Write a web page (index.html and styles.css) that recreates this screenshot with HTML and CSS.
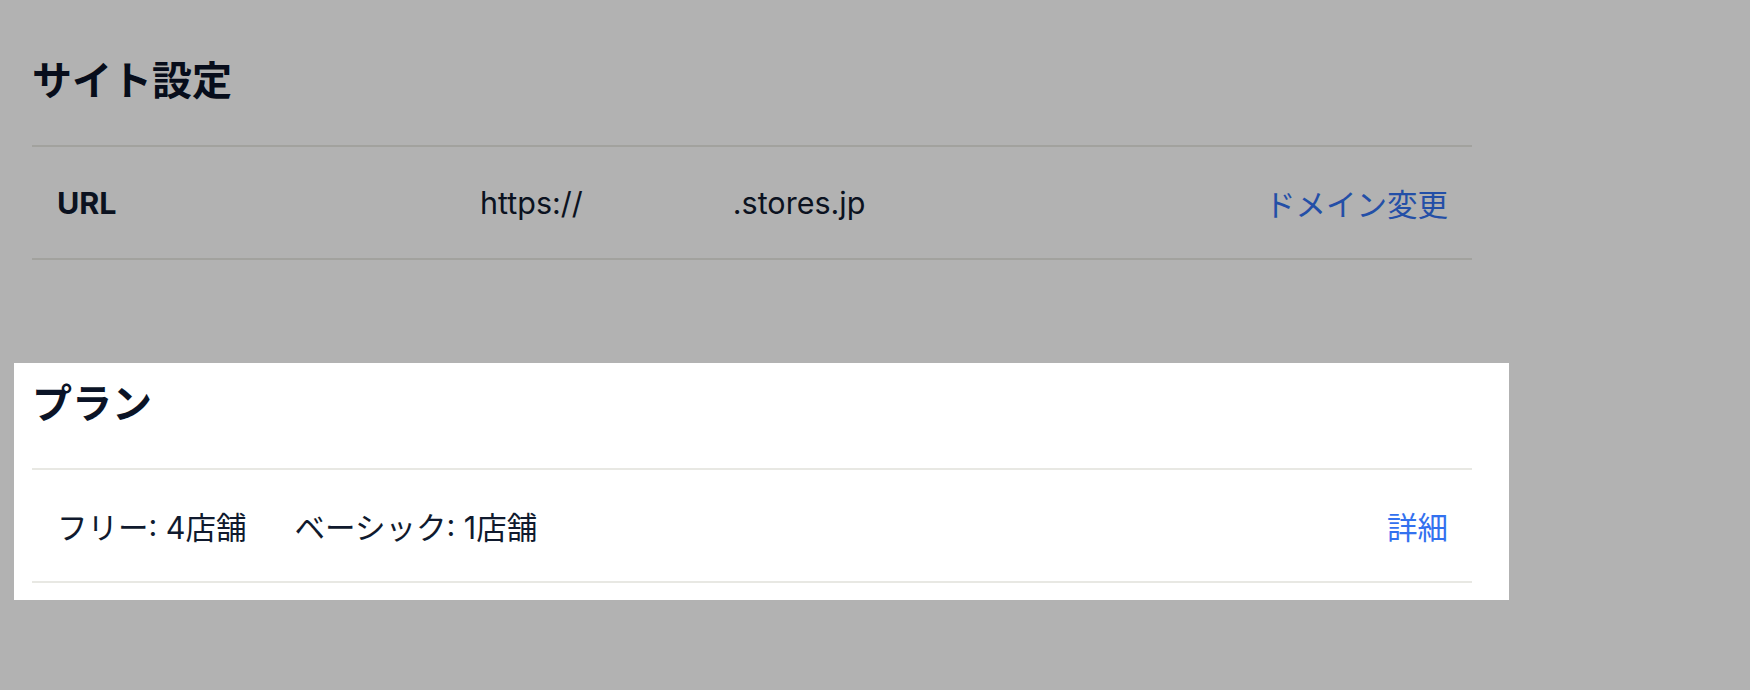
FILE: index.html
```html
<!DOCTYPE html>
<html lang="ja">
<head>
    <meta charset="UTF-8" />
    <meta name="viewport" content="width=device-width, initial-scale=1" />
    <title>サイト設定</title>
    <link rel="stylesheet" href="styles.css">
</head>
<body>

    <main class="settings">
        <section class="section">
            <h2 class="section-title">サイト設定</h2>
            <div class="row">
                <div class="row-label">URL</div>
                <div class="row-value">https://<span class="masked"></span>.stores.jp</div>
                <a class="row-link" href="#">ドメイン変更</a>
            </div>
        </section>

        <section class="section section-highlight">
            <h2 class="section-title">プラン</h2>
            <div class="row">
                <div class="plan-list">
                    <span>フリー: 4店舗</span>
                    <span>ベーシック: 1店舗</span>
                </div>
                <a class="row-link" href="#">詳細</a>
            </div>
        </section>
    </main>

    <div class="overlay"></div>

</body>
</html>
```

FILE: styles.css
```css
body {
    margin: 0;
    font-family: 'Inter', 'Noto Sans CJK JP', sans-serif;
    background-color: #fff;
    color: #101a2e;
}

.settings {
    width: 1440px;
    padding: 52px 0 0 32px;
}

.section {
    margin-bottom: 103px;
}

.section-title {
    margin: 0;
    font-size: 40px;
    line-height: 52px;
    font-weight: bold;
    font-family: 'Noto Sans CJK JP', sans-serif;
    color: #0b1427;
    padding-bottom: 41px;
    border-bottom: 2px solid #e8e8e3;
}

.row {
    display: flex;
    align-items: center;
    height: 111px;
    padding: 0 24px 0 25px;
    border-bottom: 2px solid #e8e8e3;
    font-size: 30.5px;
}

.row-label {
    width: 423px;
    font-weight: bold;
}

.row-value {
    flex: 1;
}

.masked {
    display: inline-block;
    width: 150px;
}

.plan-list {
    flex: 1;
    display: flex;
    gap: 48px;
}

.row-link {
    color: #3371ef;
    text-decoration: none;
    font-family: 'Noto Sans CJK JP', sans-serif;
}

/* tutorial spotlight */
.overlay {
    position: fixed;
    inset: 0;
    background-color: rgba(0, 0, 0, 0.3);
    z-index: 1;
}

.section-highlight {
    position: relative;
    z-index: 2;
    background-color: #fff;
    margin: 0 -37px 0 -18px;
    padding: 12px 37px 17px 18px;
}
```
